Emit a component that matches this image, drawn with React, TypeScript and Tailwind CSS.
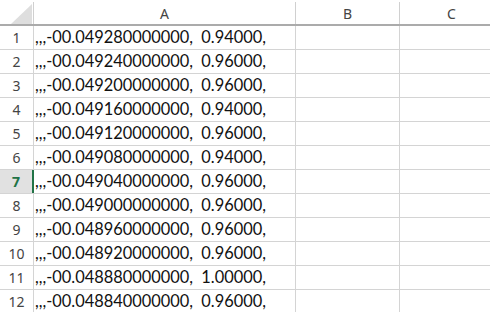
import React from "react";

const rows: [string, string][] = [
  ["-00.049280000000", "0.94000"],
  ["-00.049240000000", "0.96000"],
  ["-00.049200000000", "0.96000"],
  ["-00.049160000000", "0.94000"],
  ["-00.049120000000", "0.96000"],
  ["-00.049080000000", "0.94000"],
  ["-00.049040000000", "0.96000"],
  ["-00.049000000000", "0.96000"],
  ["-00.048960000000", "0.96000"],
  ["-00.048920000000", "0.96000"],
  ["-00.048880000000", "1.00000"],
  ["-00.048840000000", "0.96000"],
];

const hdrFont = { fontFamily: '"Noto Sans", "Open Sans", sans-serif' };
const cellFont = { fontFamily: 'Lato, "Open Sans", sans-serif' };

export default function App() {
  return (
    <div className="w-[490px] h-[312px] overflow-hidden bg-white">
      {/* header row */}
      <div className="flex h-[26px] pt-[2px] border-b-2 border-[#ababab]">
        <div className="w-[34px] shrink-0 border-r border-[#d0d0d0] relative">
          <svg className="absolute left-[11px] top-[2px]" width="21" height="20" viewBox="0 0 21 20">
            <polygon points="21,0 21,20 0,20" fill="#dedede" />
          </svg>
        </div>
        <div
          className="w-[262px] shrink-0 border-r border-[#d0d0d0] flex items-center justify-center text-[14px] text-[#444]"
          style={hdrFont}
        >
          A
        </div>
        <div
          className="w-[104px] shrink-0 border-r border-[#d0d0d0] flex items-center justify-center text-[14px] text-[#444]"
          style={hdrFont}
        >
          B
        </div>
        <div
          className="w-[104px] shrink-0 border-r border-[#d0d0d0] flex items-center justify-center text-[14px] text-[#444]"
          style={hdrFont}
        >
          C
        </div>
      </div>
      {rows.map(([a, b], i) => {
        const sel = i === 6;
        return (
          <div key={i} className="flex h-[24px] border-b border-[#d4d4d4]">
            <div
              className={
                sel
                  ? "w-[34px] shrink-0 border-r-2 border-[#217346] bg-[#e1e1e1] flex items-center justify-center text-[14px] font-bold text-[#217346]"
                  : "w-[34px] shrink-0 border-r border-[#d4d4d4] flex items-center justify-center text-[14px] text-[#444]"
              }
              style={hdrFont}
            >
              {i + 1}
            </div>
            <div
              className="w-[262px] shrink-0 border-r border-[#d4d4d4] flex items-center pl-[1px] text-[16.4px] text-[#111] whitespace-pre"
              style={cellFont}
            >
              {",,," + a + ",  " + b + ","}
            </div>
            <div className="w-[104px] shrink-0 border-r border-[#d4d4d4]" />
            <div className="w-[104px] shrink-0 border-r border-[#d4d4d4]" />
          </div>
        );
      })}
    </div>
  );
}
